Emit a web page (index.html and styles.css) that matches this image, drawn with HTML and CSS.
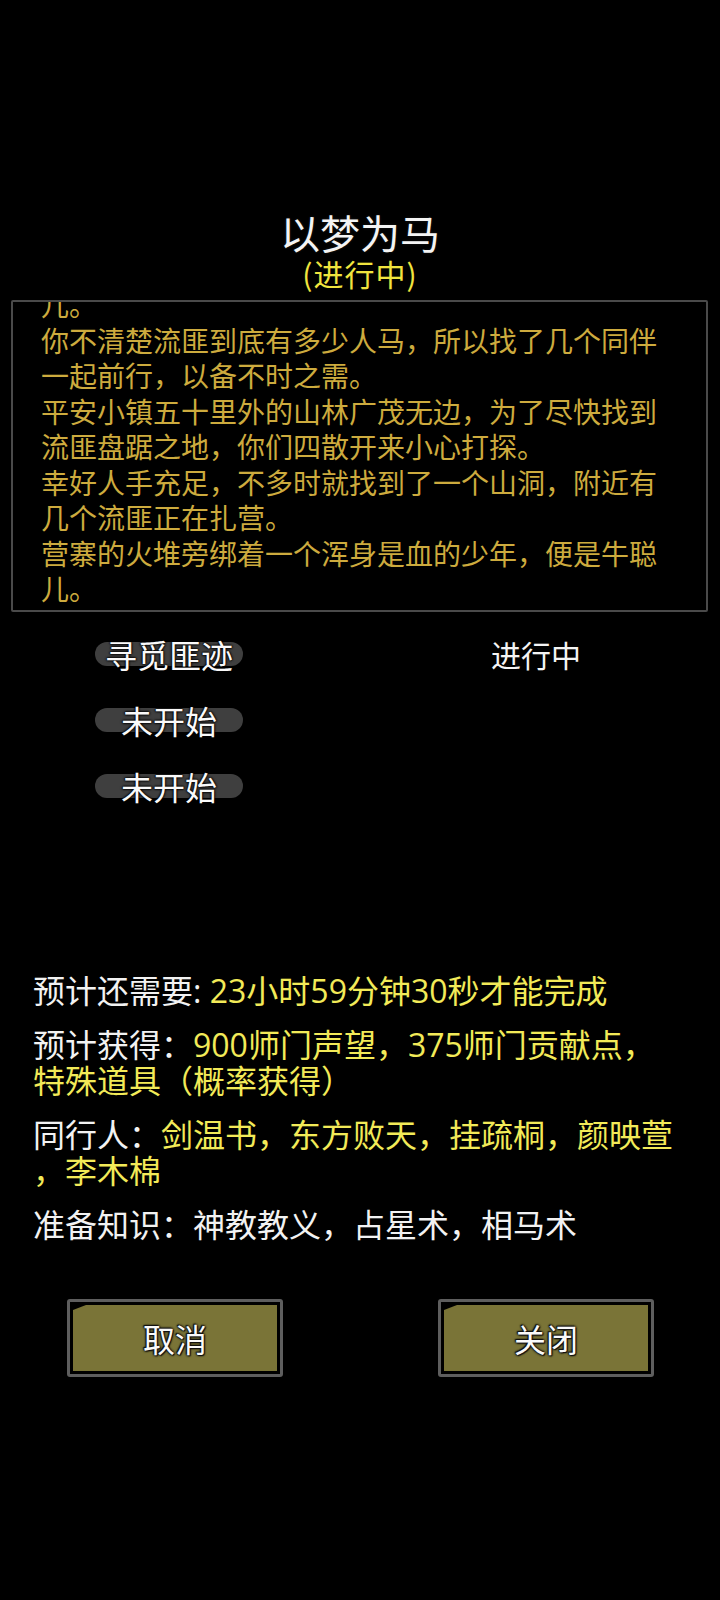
FILE: index.html
```html
<!DOCTYPE html>
<html lang="zh-CN">
<head>
<meta charset="utf-8">
<title>以梦为马</title>
<link rel="stylesheet" href="styles.css">
</head>
<body>
<div class="screen">
  <header class="header">
    <h1 class="title">以梦为马</h1>
    <div class="subtitle">(进行中)</div>
  </header>

  <div class="story">
    <div class="story-scroll">
      <p class="story-p story-first">儿。</p>
      <p class="story-p">你不清楚流匪到底有多少人马，所以找了几个同伴一起前行，以备不时之需。</p>
      <p class="story-p">平安小镇五十里外的山林广茂无边，为了尽快找到流匪盘踞之地，你们四散开来小心打探。</p>
      <p class="story-p">幸好人手充足，不多时就找到了一个山洞，附近有几个流匪正在扎营。</p>
      <p class="story-p">营寨的火堆旁绑着一个浑身是血的少年，便是牛聪儿。</p>
    </div>
  </div>

  <div class="stages">
    <div class="stage">
      <span class="pill">寻觅匪迹</span>
      <span class="status">进行中</span>
    </div>
    <div class="stage">
      <span class="pill">未开始</span>
      <span class="status"></span>
    </div>
    <div class="stage">
      <span class="pill">未开始</span>
      <span class="status"></span>
    </div>
  </div>

  <div class="info">
    <p class="info-line"><span class="label">预计还需要: </span><span class="value">23小时59分钟30秒才能完成</span></p>
    <p class="info-line"><span class="label">预计获得：</span><span class="value">900师门声望，375师门贡献点，<br>特殊道具（概率获得）</span></p>
    <p class="info-line"><span class="label">同行人：</span><span class="value">剑温书，东方败天，挂疏桐，颜映萱<br>，李木棉</span></p>
    <p class="info-line"><span class="label">准备知识：</span><span class="label">神教教义，占星术，相马术</span></p>
  </div>

  <div class="actions">
    <button class="btn"><span class="btn-face">取消</span></button>
    <button class="btn"><span class="btn-face">关闭</span></button>
  </div>
</div>
</body>
</html>
```

FILE: styles.css
```css
html, body {
  margin: 0;
  padding: 0;
  background: #000;
}

body {
  font-family: "Noto Sans CJK SC", "Noto Sans", sans-serif;
  color: #f2f2f2;
}

.screen {
  width: 720px;
  height: 1600px;
  padding-top: 210px;
  box-sizing: border-box;
}

.header {
  text-align: center;
}

.title {
  margin: 0;
  font-size: 40px;
  line-height: 45px;
  font-weight: 400;
  color: #f4f4f4;
  text-shadow: 0 0 2px #000, 0 0 3px #222;
}

.subtitle {
  font-size: 30px;
  line-height: 36px;
  color: #f0e43e;
  letter-spacing: 1px;
}

.story {
  margin: 9px 12px 0 11px;
  height: 312px;
  box-sizing: border-box;
  border: 2px solid #4a4a4a;
  border-radius: 2px;
  overflow: hidden;
}

.story-scroll {
  padding-left: 28px;
}

.story-p {
  margin: 0;
  width: 620px;
  font-size: 28px;
  line-height: 35.5px;
  color: #cdab3e;
}

.story-first {
  margin-top: -15px;
}

.stages {
  margin-top: 9px;
}

.stage {
  display: flex;
  align-items: center;
  height: 66px;
  padding-left: 95px;
}

.pill {
  display: flex;
  align-items: center;
  justify-content: center;
  width: 148px;
  height: 24px;
  border-radius: 12px;
  background: #3f3f3f;
  font-size: 32px;
  line-height: 24px;
  color: #fafafa;
  white-space: nowrap;
  text-shadow: 0 0 2px #000, 0 0 2px #000, 0 0 3px #000;
}

.status {
  margin-left: 248px;
  font-size: 30px;
  line-height: 36px;
  color: #f4f4f4;
}

.info {
  margin-top: 154px;
  padding-left: 33px;
  display: flex;
  flex-direction: column;
  gap: 18px;
}

.info-line {
  margin: 0;
  font-size: 32px;
  line-height: 36px;
  white-space: nowrap;
  font-family: "Open Sans", "Noto Sans CJK SC", sans-serif;
}

.label {
  color: #f2f2f2;
}

.value {
  color: #f2ea58;
  text-shadow: 0 0 2px #000;
}

.actions {
  margin-top: 56px;
  padding-left: 67px;
  display: flex;
  gap: 155px;
}

.btn {
  width: 216px;
  height: 78px;
  padding: 3px;
  margin: 0;
  border: 3px solid #5e5e5e;
  border-radius: 3px;
  background: #000;
  box-sizing: border-box;
  font-family: inherit;
  cursor: pointer;
}

.btn-face {
  display: flex;
  align-items: center;
  justify-content: center;
  width: 100%;
  height: 100%;
  background: #7a7437;
  clip-path: polygon(13px 0, 100% 0, 100% 100%, 0 100%, 0 5px);
  font-size: 32px;
  line-height: 1;
  color: #fafafa;
  text-shadow: 0 0 2px #111, 0 0 2px #111, 0 0 3px #111, 1px 1px 1px #111, -1px -1px 1px #111;
}
```
